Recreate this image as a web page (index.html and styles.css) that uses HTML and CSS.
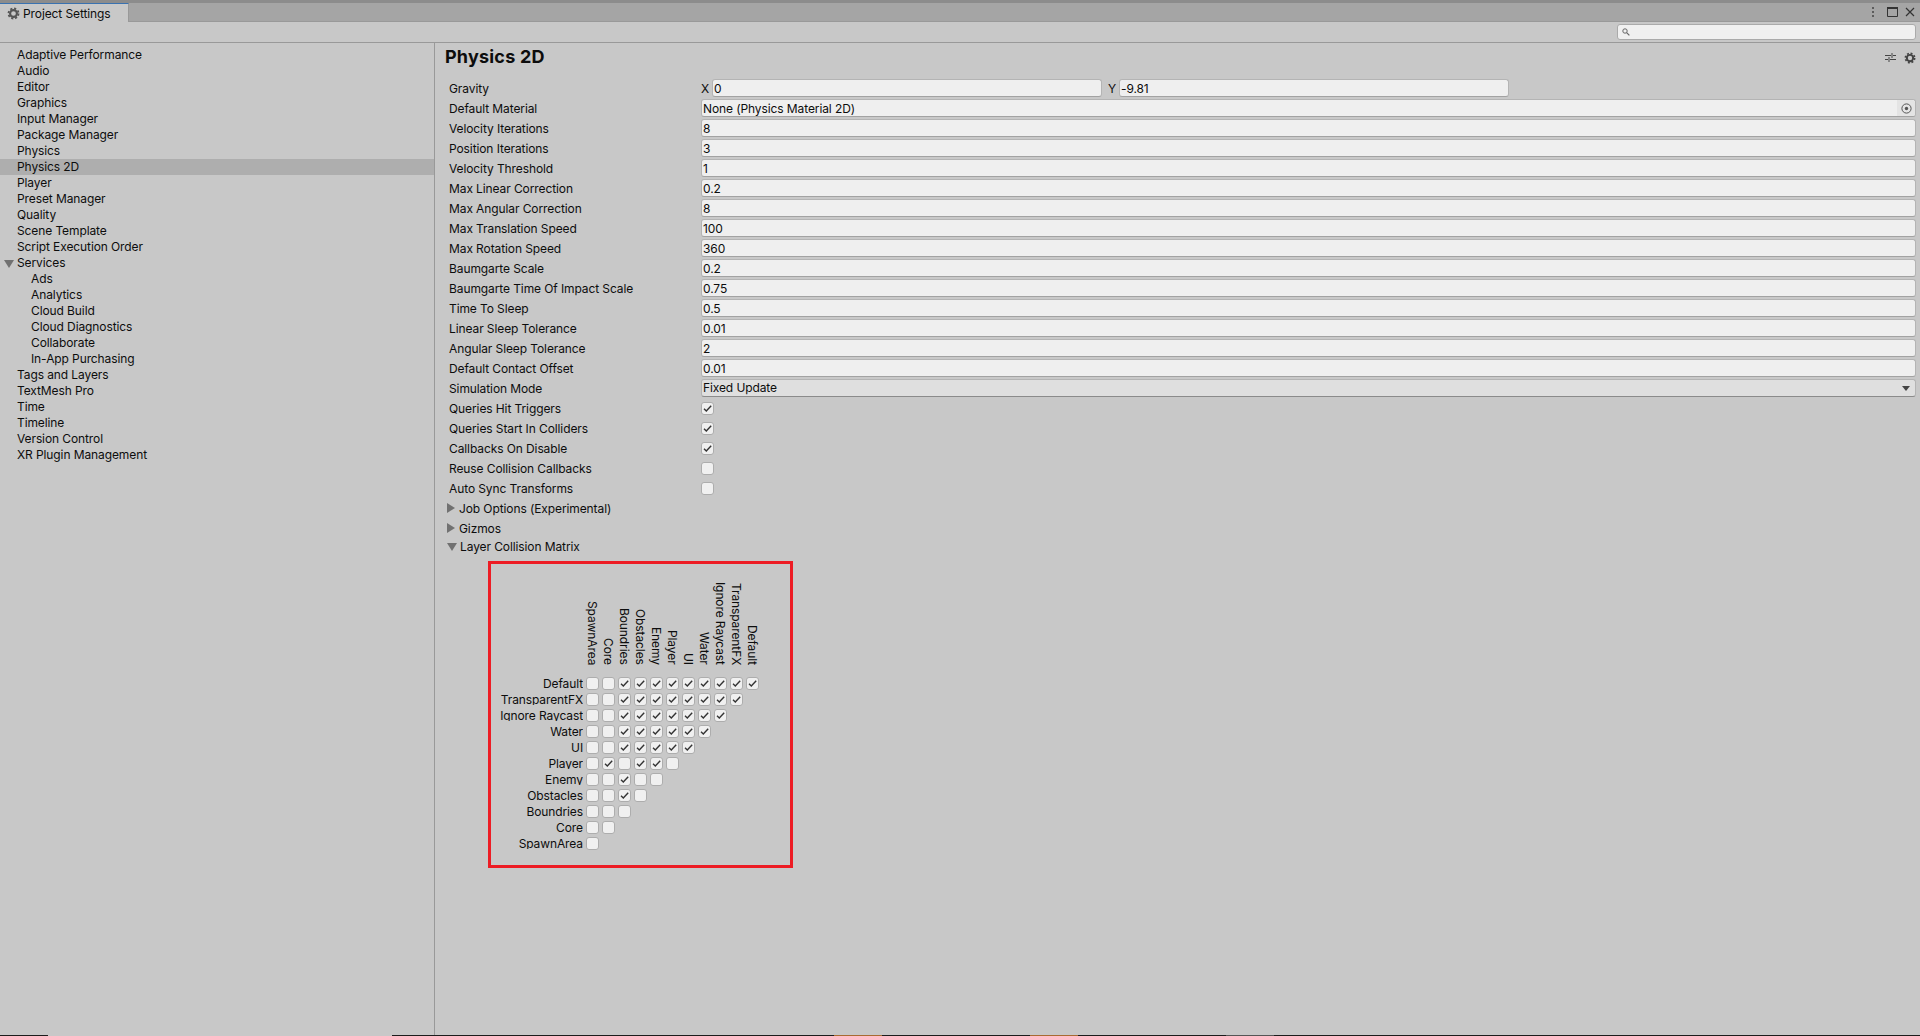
FILE: index.html
```html
<!DOCTYPE html>
<html>

<head>
    <title>Project Settings</title>
    <link rel="stylesheet" href="styles.css">
</head>

<body>
    <svg class="defs">
        <symbol id="gear" viewBox="0 0 16 16">
            <circle cx="8" cy="8" r="4.2" fill="none" stroke="currentColor" stroke-width="2.6"/>
            <circle cx="8" cy="8" r="6.2" fill="none" stroke="currentColor" stroke-width="2.2" stroke-dasharray="2.6 2.27"/>
        </symbol>
        <symbol id="check" viewBox="0 0 13 13">
            <path d="M3 6.8 L5.3 9 L10.2 3.8" fill="none" stroke="#333" stroke-width="1.4"/>
        </symbol>
    </svg>

    <div class="topline"></div>

    <div class="tabbar">
        <div class="tab">
            <svg class="tab-gear"><use href="#gear"/></svg>
            <span>Project Settings</span>
        </div>
        <div class="window-btns">
            <svg class="kebab" viewBox="0 0 4 12"><circle cx="2" cy="2" r="1"/><circle cx="2" cy="6" r="1"/><circle cx="2" cy="10" r="1"/></svg>
            <svg class="maxi" viewBox="0 0 11 10"><path d="M.5.5h10v9H.5z" fill="none" stroke="#333"/><path d="M0 0h11v2H0z" fill="#333"/></svg>
            <svg class="closex" viewBox="0 0 10 10"><path d="M1 1l8 8M9 1L1 9" fill="none" stroke="#333" stroke-width="1.2"/></svg>
        </div>
    </div>

    <div class="toolbar">
        <div class="search">
            <svg viewBox="0 0 8 8"><circle cx="3" cy="3" r="2.2" fill="none" stroke="#666"/><path d="M4.6 4.6L7.4 7.4" stroke="#666" stroke-width="1.2"/></svg>
        </div>
    </div>

    <div class="main">
        <div class="sidebar">
            <div class="item">Adaptive Performance</div>
            <div class="item">Audio</div>
            <div class="item">Editor</div>
            <div class="item">Graphics</div>
            <div class="item">Input Manager</div>
            <div class="item">Package Manager</div>
            <div class="item">Physics</div>
            <div class="item selected">Physics 2D</div>
            <div class="item">Player</div>
            <div class="item">Preset Manager</div>
            <div class="item">Quality</div>
            <div class="item">Scene Template</div>
            <div class="item">Script Execution Order</div>
            <div class="item"><i class="arrow-down side-arrow"></i>Services</div>
            <div class="item child">Ads</div>
            <div class="item child">Analytics</div>
            <div class="item child">Cloud Build</div>
            <div class="item child">Cloud Diagnostics</div>
            <div class="item child">Collaborate</div>
            <div class="item child">In-App Purchasing</div>
            <div class="item">Tags and Layers</div>
            <div class="item">TextMesh Pro</div>
            <div class="item">Time</div>
            <div class="item">Timeline</div>
            <div class="item">Version Control</div>
            <div class="item">XR Plugin Management</div>
        </div>

        <div class="panel">
            <div class="panel-head">
                <h1>Physics 2D</h1>
                <div class="panel-icons">
                    <svg class="presets" viewBox="0 0 11 11"><path d="M0 3.5h6M8 3.5h3M7 1v5M0 7.5h3M5 7.5h6M4 5v5" fill="none" stroke="#444"/></svg>
                    <svg class="panel-gear"><use href="#gear"/></svg>
                </div>
            </div>

            <div class="row">
                <label>Gravity</label>
                <div class="vec">
                    <span class="axis">X</span><div class="field vec-x">0</div>
                    <span class="axis axis-y">Y</span><div class="field vec-y">-9.81</div>
                </div>
            </div>
            <div class="row">
                <label>Default Material</label>
                <div class="field object">
                    <span>None (Physics Material 2D)</span>
                    <span class="picker"><svg viewBox="0 0 11 11"><circle cx="5.5" cy="5.5" r="4.6" fill="none" stroke="#555"/><circle cx="5.5" cy="5.5" r="1.7" fill="#555"/></svg></span>
                </div>
            </div>
            <div class="row"><label>Velocity Iterations</label><div class="field">8</div></div>
            <div class="row"><label>Position Iterations</label><div class="field">3</div></div>
            <div class="row"><label>Velocity Threshold</label><div class="field">1</div></div>
            <div class="row"><label>Max Linear Correction</label><div class="field">0.2</div></div>
            <div class="row"><label>Max Angular Correction</label><div class="field">8</div></div>
            <div class="row"><label>Max Translation Speed</label><div class="field">100</div></div>
            <div class="row"><label>Max Rotation Speed</label><div class="field">360</div></div>
            <div class="row"><label>Baumgarte Scale</label><div class="field">0.2</div></div>
            <div class="row"><label>Baumgarte Time Of Impact Scale</label><div class="field">0.75</div></div>
            <div class="row"><label>Time To Sleep</label><div class="field">0.5</div></div>
            <div class="row"><label>Linear Sleep Tolerance</label><div class="field">0.01</div></div>
            <div class="row"><label>Angular Sleep Tolerance</label><div class="field">2</div></div>
            <div class="row"><label>Default Contact Offset</label><div class="field">0.01</div></div>
            <div class="row">
                <label>Simulation Mode</label>
                <div class="dropdown"><span>Fixed Update</span><i class="drop-arrow"></i></div>
            </div>
            <div class="row"><label>Queries Hit Triggers</label><i class="cb"><svg><use href="#check"/></svg></i></div>
            <div class="row"><label>Queries Start In Colliders</label><i class="cb"><svg><use href="#check"/></svg></i></div>
            <div class="row"><label>Callbacks On Disable</label><i class="cb"><svg><use href="#check"/></svg></i></div>
            <div class="row"><label>Reuse Collision Callbacks</label><i class="cb"></i></div>
            <div class="row"><label>Auto Sync Transforms</label><i class="cb"></i></div>
            <div class="row fold"><i class="arrow-right"></i>Job Options (Experimental)</div>
            <div class="row fold"><i class="arrow-right"></i>Gizmos</div>
            <div class="row fold fold-open"><i class="arrow-down"></i>Layer Collision Matrix</div>

            <div class="matrix-box">
                <div class="matrix-head">
                    <span>SpawnArea</span>
                    <span>Core</span>
                    <span>Boundries</span>
                    <span>Obstacles</span>
                    <span>Enemy</span>
                    <span>Player</span>
                    <span>UI</span>
                    <span>Water</span>
                    <span>Ignore Raycast</span>
                    <span>TransparentFX</span>
                    <span>Default</span>
                </div>
                <div class="mrow"><span class="mlabel">Default</span><i class="cb"></i><i class="cb"></i><i class="cb"><svg><use href="#check"/></svg></i><i class="cb"><svg><use href="#check"/></svg></i><i class="cb"><svg><use href="#check"/></svg></i><i class="cb"><svg><use href="#check"/></svg></i><i class="cb"><svg><use href="#check"/></svg></i><i class="cb"><svg><use href="#check"/></svg></i><i class="cb"><svg><use href="#check"/></svg></i><i class="cb"><svg><use href="#check"/></svg></i><i class="cb"><svg><use href="#check"/></svg></i></div>
                <div class="mrow"><span class="mlabel">TransparentFX</span><i class="cb"></i><i class="cb"></i><i class="cb"><svg><use href="#check"/></svg></i><i class="cb"><svg><use href="#check"/></svg></i><i class="cb"><svg><use href="#check"/></svg></i><i class="cb"><svg><use href="#check"/></svg></i><i class="cb"><svg><use href="#check"/></svg></i><i class="cb"><svg><use href="#check"/></svg></i><i class="cb"><svg><use href="#check"/></svg></i><i class="cb"><svg><use href="#check"/></svg></i></div>
                <div class="mrow"><span class="mlabel">Ignore Raycast</span><i class="cb"></i><i class="cb"></i><i class="cb"><svg><use href="#check"/></svg></i><i class="cb"><svg><use href="#check"/></svg></i><i class="cb"><svg><use href="#check"/></svg></i><i class="cb"><svg><use href="#check"/></svg></i><i class="cb"><svg><use href="#check"/></svg></i><i class="cb"><svg><use href="#check"/></svg></i><i class="cb"><svg><use href="#check"/></svg></i></div>
                <div class="mrow"><span class="mlabel">Water</span><i class="cb"></i><i class="cb"></i><i class="cb"><svg><use href="#check"/></svg></i><i class="cb"><svg><use href="#check"/></svg></i><i class="cb"><svg><use href="#check"/></svg></i><i class="cb"><svg><use href="#check"/></svg></i><i class="cb"><svg><use href="#check"/></svg></i><i class="cb"><svg><use href="#check"/></svg></i></div>
                <div class="mrow"><span class="mlabel">UI</span><i class="cb"></i><i class="cb"></i><i class="cb"><svg><use href="#check"/></svg></i><i class="cb"><svg><use href="#check"/></svg></i><i class="cb"><svg><use href="#check"/></svg></i><i class="cb"><svg><use href="#check"/></svg></i><i class="cb"><svg><use href="#check"/></svg></i></div>
                <div class="mrow"><span class="mlabel">Player</span><i class="cb"></i><i class="cb"><svg><use href="#check"/></svg></i><i class="cb"></i><i class="cb"><svg><use href="#check"/></svg></i><i class="cb"><svg><use href="#check"/></svg></i><i class="cb"></i></div>
                <div class="mrow"><span class="mlabel">Enemy</span><i class="cb"></i><i class="cb"></i><i class="cb"><svg><use href="#check"/></svg></i><i class="cb"></i><i class="cb"></i></div>
                <div class="mrow"><span class="mlabel">Obstacles</span><i class="cb"></i><i class="cb"></i><i class="cb"><svg><use href="#check"/></svg></i><i class="cb"></i></div>
                <div class="mrow"><span class="mlabel">Boundries</span><i class="cb"></i><i class="cb"></i><i class="cb"></i></div>
                <div class="mrow"><span class="mlabel">Core</span><i class="cb"></i><i class="cb"></i></div>
                <div class="mrow"><span class="mlabel">SpawnArea</span><i class="cb"></i></div>
            </div>
        </div>
    </div>

    <div class="taskbar">
        <i class="tb-black tb-first"></i>
        <i class="tb-light"></i>
        <i class="tb-black tb-a"></i>
        <i class="tb-orange"></i>
        <i class="tb-black tb-b"></i>
        <i class="tb-orange"></i>
        <i class="tb-black tb-c"></i>
        <i class="tb-gray"></i>
        <i class="tb-black tb-rest"></i>
    </div>
</body>
</html>
```

FILE: styles.css
```css
* {
    box-sizing: border-box;
}

body {
    margin: 0;
    height: 100vh;
    display: flex;
    flex-direction: column;
    overflow: hidden;
    background-color: #c8c8c8;
    color: #0d0d0d;
    font-family: Inter, "Noto Sans", sans-serif;
    font-size: 12px;
    letter-spacing: -0.1px;
}

.defs {
    display: none;
}

.topline {
    height: 3px;
    flex: none;
    background-color: #8c8c8c;
}

/* title tab row */
.tabbar {
    height: 19px;
    flex: none;
    display: flex;
    justify-content: space-between;
    background-color: #a5a5a5;
    border-bottom: 1px solid #999;
}

.tab {
    width: 129px;
    height: 19px;
    display: flex;
    align-items: center;
    gap: 3px;
    padding-left: 7px;
    background-color: #c8c8c8;
    border-top: 1px solid #3a72b0;
    border-right: 1px solid #999;
}

.tab-gear {
    width: 13px;
    height: 13px;
    color: #555;
}

.window-btns {
    display: flex;
    align-items: center;
    padding-right: 5px;
}

.kebab {
    width: 4px;
    height: 12px;
    fill: #444;
    margin-right: 12px;
}

.maxi {
    width: 11px;
    height: 10px;
    margin-right: 7px;
}

.closex {
    width: 10px;
    height: 10px;
}

.toolbar {
    height: 21px;
    flex: none;
    display: flex;
    justify-content: flex-end;
    padding: 2px 4px 0 0;
    border-bottom: 1px solid #999;
}

.search {
    width: 299px;
    height: 16px;
    display: flex;
    align-items: center;
    padding-left: 4px;
    background-color: #f0f0f0;
    border: 1px solid #aaa;
    border-radius: 3px;
}

.search svg {
    width: 8px;
    height: 8px;
}

.main {
    flex: 1;
    display: flex;
    min-height: 0;
}

/* left list */
.sidebar {
    width: 435px;
    flex: none;
    padding-top: 4px;
    border-right: 1px solid #999;
}

.item {
    position: relative;
    height: 16px;
    line-height: 16px;
    padding-left: 17px;
    white-space: nowrap;
}

.item.selected {
    background-color: #aeaeae;
}

.item.child {
    padding-left: 31px;
}

.arrow-down {
    display: block;
    width: 0;
    height: 0;
    border-left: 5px solid transparent;
    border-right: 5px solid transparent;
    border-top: 8px solid #717171;
}

.arrow-right {
    display: block;
    width: 0;
    height: 0;
    border-top: 5px solid transparent;
    border-bottom: 5px solid transparent;
    border-left: 8px solid #717171;
}

.side-arrow {
    position: absolute;
    left: 4px;
    top: 5px;
}

/* right panel */
.panel {
    flex: 1;
    min-width: 0;
    padding-right: 4px;
}

.panel-head {
    height: 36px;
    display: flex;
    justify-content: space-between;
    padding-left: 10px;
}

h1 {
    margin: 0;
    font-size: 18px;
    font-weight: 700;
    line-height: 28px;
    letter-spacing: 0.2px;
}

.panel-icons {
    display: flex;
    align-items: flex-start;
    gap: 8px;
    padding-top: 9px;
}

.presets {
    width: 11px;
    height: 11px;
}

.panel-gear {
    width: 12px;
    height: 12px;
    color: #444;
}

.row {
    height: 20px;
    padding-bottom: 2px;
    display: flex;
    align-items: center;
    padding-left: 14px;
    white-space: nowrap;
}

.row label {
    width: 252px;
    flex: none;
}

.field {
    flex: 1;
    height: 18px;
    line-height: 17px;
    padding-left: 1px;
    background-color: #efefef;
    border: 1px solid #b4b4b4;
    border-bottom-color: #a2a2a2;
    border-radius: 3px;
}

.vec {
    display: flex;
    align-items: center;
}

.axis {
    width: 11px;
}

.axis-y {
    width: 11px;
    margin-left: 6px;
}

.field.vec-x {
    flex: none;
    width: 390px;
}

.field.vec-y {
    flex: none;
    width: 390px;
}

.object {
    display: flex;
    justify-content: space-between;
    padding-right: 0;
}

.picker {
    width: 18px;
    display: flex;
    align-items: center;
    justify-content: center;
    background-color: #e4e4e4;
    border-radius: 0 3px 3px 0;
}

.picker svg {
    width: 11px;
    height: 11px;
}

.dropdown {
    flex: 1;
    height: 18px;
    line-height: 16px;
    padding: 0 5px 0 1px;
    display: flex;
    justify-content: space-between;
    align-items: center;
    background-color: #dfdfdf;
    border: 1px solid #b4b4b4;
    border-bottom-color: #8b8b8b;
    border-radius: 3px;
}

.drop-arrow {
    width: 0;
    height: 0;
    border-left: 4px solid transparent;
    border-right: 4px solid transparent;
    border-top: 5px solid #444;
}

.cb {
    display: block;
    width: 13px;
    height: 13px;
    flex: none;
    background-color: #f0f0f0;
    border: 1px solid #adadad;
    border-radius: 3px;
}

.cb svg {
    display: block;
    width: 13px;
    height: 13px;
    margin: -1px;
}

.fold {
    padding-left: 12px;
}

.fold i {
    margin-right: 4px;
}

.fold-open {
    height: 18px;
    padding-bottom: 3px;
}

.fold-open i {
    margin-right: 3px;
}

/* the red frame round the matrix */
.matrix-box {
    width: 305px;
    height: 307px;
    margin: 4px 0 0 53px;
    padding-top: 9px;
    border: 3px solid #ed1c24;
}

.matrix-head {
    height: 92px;
    margin-bottom: 12px;
    padding-left: 95px;
    display: flex;
    align-items: flex-end;
}

.matrix-head span {
    width: 16px;
    flex: none;
    line-height: 13px;
    padding-right: 3px;
    writing-mode: vertical-rl;
    white-space: nowrap;
}

.mrow {
    height: 16px;
    display: flex;
}

.mrow .cb {
    margin-right: 3px;
}

.mlabel {
    width: 92px;
    height: 12px;
    flex: none;
    margin-right: 3px;
    line-height: 14px;
    text-align: right;
    white-space: nowrap;
    overflow: hidden;
}

/* strip of the desktop showing under the window */
.taskbar {
    height: 1px;
    flex: none;
    display: flex;
}

.tb-black {
    background-color: #1c1c1c;
}

.tb-first {
    width: 48px;
}

.tb-light {
    width: 344px;
}

.tb-a {
    width: 442px;
}

.tb-orange {
    width: 48px;
    background-color: #a86a32;
}

.tb-b {
    width: 148px;
}

.tb-c {
    width: 148px;
}

.tb-gray {
    width: 48px;
    background-color: #555;
}

.tb-rest {
    flex: 1;
}
```
